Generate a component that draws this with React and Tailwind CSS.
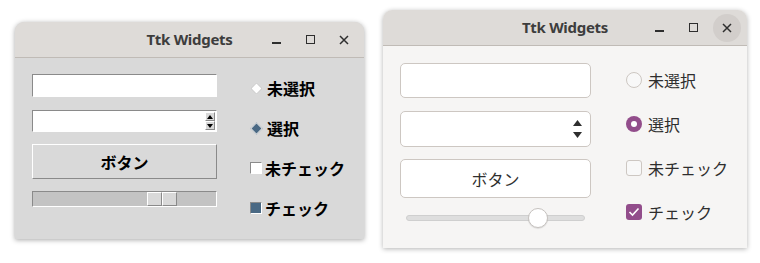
import React from "react";

const jp = { fontFamily: '"Noto Sans CJK JP", "Noto Sans", sans-serif' };
const ui = { fontFamily: '"Noto Sans", "Noto Sans CJK JP", sans-serif' };

// window chrome shared by both windows
const TitleBar = ({ roundClose }) => (
  <div className="relative h-[36px] flex items-center justify-center bg-[#dedbd8] border-b border-[#c0bbb6] rounded-t-[9px]">
    <span style={ui} className="text-[15px] font-bold text-[#3d3d3d] tracking-[-0.3px]">Ttk Widgets</span>
    <div className="absolute right-[6px] top-0 h-full flex items-center gap-[6px] text-[#2e2e2e]">
      <div className="w-[28px] h-[28px] flex items-center justify-center">
        <div className="w-[9px] h-[1.5px] bg-[#2e2e2e] mt-[7px]" />
      </div>
      <div className="w-[28px] h-[28px] flex items-center justify-center">
        <div className="w-[9px] h-[9px] border-[1.5px] border-[#2e2e2e]" />
      </div>
      <div className={"w-[28px] h-[28px] flex items-center justify-center rounded-full " + (roundClose ? "bg-[#d2cecb]" : "")}>
        <svg width="10" height="10" viewBox="0 0 10 10">
          <path d="M1 1L9 9M9 1L1 9" stroke="#2e2e2e" strokeWidth="1.5" />
        </svg>
      </div>
    </div>
  </div>
);

const ClassicWindow = () => (
  <div className="w-[349px] h-[217px] mt-[22px] flex flex-col rounded-t-[9px] bg-[#d9d9d9] shadow-[0_1px_5px_rgba(0,0,0,0.35)]">
    <TitleBar />
    <div className="flex-1 flex pl-[17px] pt-[16px]">
      <div className="w-[185px] flex flex-col">
        {/* entry */}
        <div className="h-[23px] bg-white border-t border-l border-[#8a8a8a] border-b border-r border-b-white border-r-white" />
        {/* spinbox */}
        <div className="mt-[13px] h-[22px] bg-white border-t border-l border-[#8a8a8a] border-b border-r border-b-white border-r-white flex justify-end items-center pr-[1px]">
          <div className="flex flex-col w-[10px] gap-0">
            <div className="h-[9px] bg-[#d9d9d9] border border-t-white border-l-white border-b-[#8a8a8a] border-r-[#8a8a8a] flex items-center justify-center">
              <svg width="6" height="4" viewBox="0 0 6 4"><path d="M3 0L6 4H0Z" fill="#000" /></svg>
            </div>
            <div className="h-[9px] bg-[#d9d9d9] border border-t-white border-l-white border-b-[#8a8a8a] border-r-[#8a8a8a] flex items-center justify-center">
              <svg width="6" height="4" viewBox="0 0 6 4"><path d="M0 0H6L3 4Z" fill="#000" /></svg>
            </div>
          </div>
        </div>
        {/* button */}
        <div style={jp} className="mt-[12px] h-[35px] flex items-center justify-center bg-[#d9d9d9] border border-t-white border-l-white border-b-[#8a8a8a] border-r-[#8a8a8a] text-[16px] font-bold text-black">
          ボタン
        </div>
        {/* scale */}
        <div className="mt-[12px] h-[16px] bg-[#c3c3c3] border border-t-[#8a8a8a] border-l-[#8a8a8a] border-b-white border-r-white flex pl-[114px]">
          <div className="w-[15px] h-full bg-[#d9d9d9] border border-t-white border-l-white border-b-[#8a8a8a] border-r-[#8a8a8a]" />
          <div className="w-[15px] h-full bg-[#d9d9d9] border border-t-white border-l-white border-b-[#8a8a8a] border-r-[#8a8a8a]" />
        </div>
      </div>
      <div style={jp} className="ml-[33px] -mt-[6px] flex flex-col text-[16px] font-bold text-black">
        <div className="h-[40px] flex items-center gap-[5px]">
          <div className="w-[12px] flex justify-center">
            <div className="w-[9px] h-[9px] rotate-45 bg-white border border-[#c8c8c8]" />
          </div>
          <span>未選択</span>
        </div>
        <div className="h-[40px] flex items-center gap-[5px]">
          <div className="w-[12px] flex justify-center">
            <div className="w-[9px] h-[9px] rotate-45 bg-[#4a6984] border border-[#e5e5e5]" />
          </div>
          <span>選択</span>
        </div>
        <div className="h-[40px] flex items-center gap-[3px]">
          <div className="w-[12px] h-[12px] bg-white border border-t-[#8a8a8a] border-l-[#8a8a8a] border-b-white border-r-white" />
          <span>未チェック</span>
        </div>
        <div className="h-[40px] flex items-center gap-[3px]">
          <div className="w-[12px] h-[12px] bg-[#4a6984] border border-t-[#8a8a8a] border-l-[#8a8a8a] border-b-white border-r-white" />
          <span>チェック</span>
        </div>
      </div>
    </div>
  </div>
);

const ModernWindow = () => (
  <div className="w-[364px] h-[238px] mt-[10px] flex flex-col rounded-t-[9px] bg-[#f6f5f4] shadow-[0_1px_5px_rgba(0,0,0,0.3)]">
    <TitleBar roundClose />
    <div className="flex-1 flex pl-[17px] pt-[17px]">
      <div className="w-[191px] flex flex-col">
        <div className="h-[35px] bg-white border border-[#cdc7c2] rounded-[5px]" />
        <div className="mt-[13px] h-[36px] bg-white border border-[#cdc7c2] rounded-[5px] flex justify-end items-center pr-[8px]">
          <div className="flex flex-col gap-[6px]">
            <svg width="9" height="6" viewBox="0 0 9 6"><path d="M4.5 0L9 6H0Z" fill="#2e2e2e" /></svg>
            <svg width="9" height="6" viewBox="0 0 9 6"><path d="M0 0H9L4.5 6Z" fill="#2e2e2e" /></svg>
          </div>
        </div>
        <div style={jp} className="mt-[12px] h-[39px] bg-white border border-[#cdc7c2] rounded-[5px] flex items-center justify-center text-[16px] text-[#2e2e2e]">
          ボタン
        </div>
        <div className="mt-[10px] h-[20px] flex items-center px-[6px]">
          <div className="relative w-full h-[6px] rounded-full bg-[#dedede] border border-[#cfcfcf]">
            <div className="absolute left-[121px] -top-[8px] w-[20px] h-[20px] rounded-full bg-white border border-[#c6c2bf] shadow-[0_1px_1px_rgba(0,0,0,0.1)]" />
          </div>
        </div>
      </div>
      <div style={jp} className="ml-[35px] -mt-[5px] flex flex-col text-[16px] text-[#2e2e2e]">
        <div className="h-[44px] flex items-center gap-[6px]">
          <div className="w-[16px] h-[16px] rounded-full border border-[#cdc7c2] bg-[#f8f8f8]" />
          <span>未選択</span>
        </div>
        <div className="h-[44px] flex items-center gap-[6px]">
          <div className="w-[16px] h-[16px] rounded-full bg-[#924d8b] flex items-center justify-center">
            <div className="w-[6px] h-[6px] rounded-full bg-white" />
          </div>
          <span>選択</span>
        </div>
        <div className="h-[44px] flex items-center gap-[6px]">
          <div className="w-[16px] h-[16px] rounded-[3px] border border-[#cdc7c2] bg-[#f8f8f8]" />
          <span>未チェック</span>
        </div>
        <div className="h-[44px] flex items-center gap-[6px]">
          <div className="w-[16px] h-[16px] rounded-[3px] bg-[#924d8b] flex items-center justify-center">
            <svg width="12" height="10" viewBox="0 0 12 10">
              <path d="M1.5 5L4.5 8L10.5 1.5" stroke="#fff" strokeWidth="1.6" fill="none" />
            </svg>
          </div>
          <span>チェック</span>
        </div>
      </div>
    </div>
  </div>
);

export default function App() {
  return (
    <div className="w-[760px] h-[263px] bg-white flex items-start pl-[15px] gap-[19px]">
      <ClassicWindow />
      <ModernWindow />
    </div>
  );
}
